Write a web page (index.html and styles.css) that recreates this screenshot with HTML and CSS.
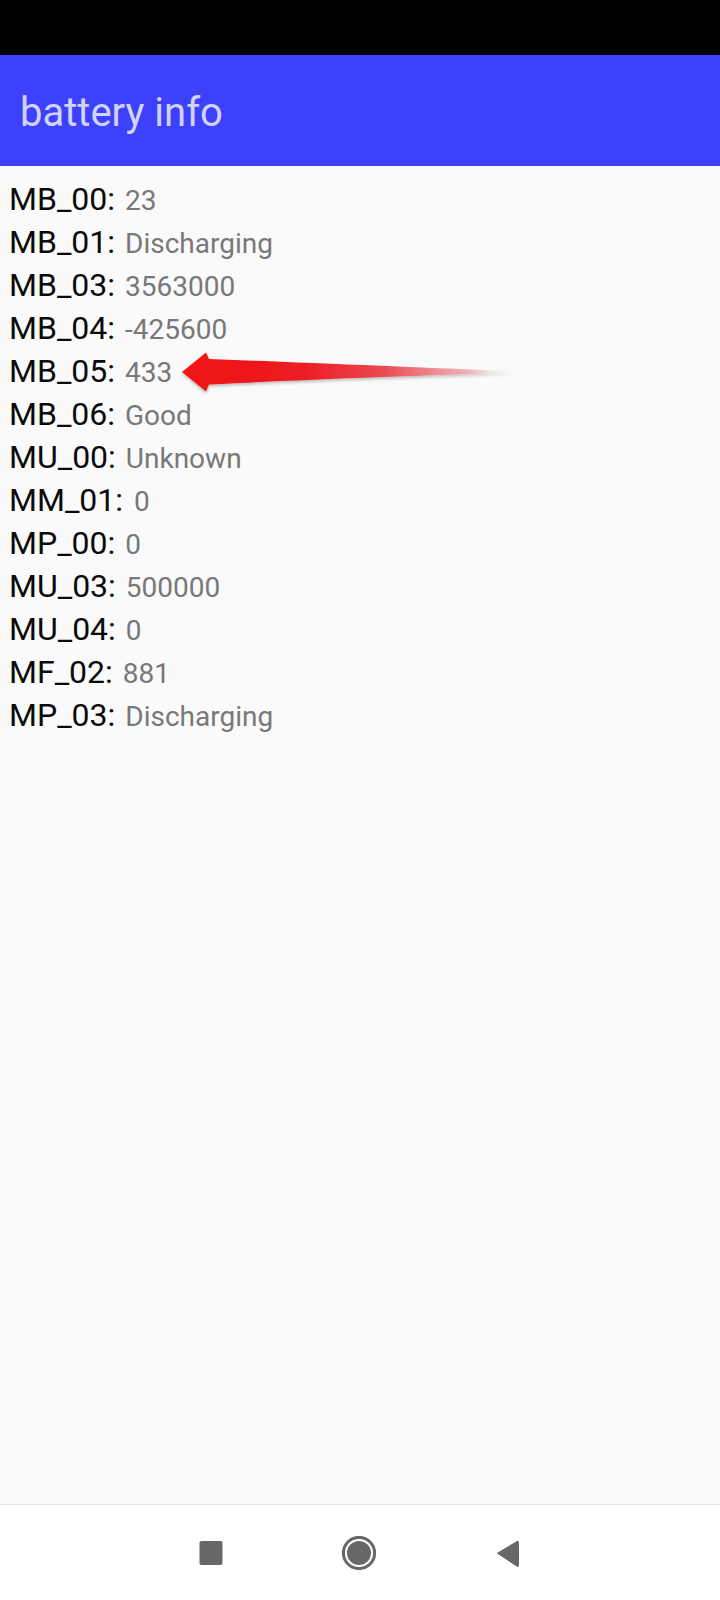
FILE: index.html
```html
<!DOCTYPE html>
<html>
<head>
<meta charset="utf-8">
<link rel="stylesheet" href="styles.css">
</head>
<body>
<div class="screen">
  <div class="status"></div>
  <div class="appbar"><span class="title">battery info</span></div>
  <div class="content">
    <div class="row"><span class="key">MB_00:</span><span class="val">23</span></div>
    <div class="row"><span class="key">MB_01:</span><span class="val">Discharging</span></div>
    <div class="row"><span class="key">MB_03:</span><span class="val">3563000</span></div>
    <div class="row"><span class="key">MB_04:</span><span class="val">-425600</span></div>
    <div class="row"><span class="key">MB_05:</span><span class="val">433</span></div>
    <div class="row"><span class="key">MB_06:</span><span class="val">Good</span></div>
    <div class="row"><span class="key">MU_00:</span><span class="val">Unknown</span></div>
    <div class="row"><span class="key">MM_01:</span><span class="val wide">0</span></div>
    <div class="row"><span class="key">MP_00:</span><span class="val">0</span></div>
    <div class="row"><span class="key">MU_03:</span><span class="val">500000</span></div>
    <div class="row"><span class="key">MU_04:</span><span class="val">0</span></div>
    <div class="row"><span class="key">MF_02:</span><span class="val">881</span></div>
    <div class="row"><span class="key">MP_03:</span><span class="val">Discharging</span></div>
    <svg class="arrow" width="360" height="60" viewBox="170 345 360 60">
      <defs>
        <linearGradient id="ag" x1="183" y1="0" x2="520" y2="0" gradientUnits="userSpaceOnUse">
          <stop offset="0" stop-color="#f01313"/>
          <stop offset="0.35" stop-color="#ec1c22"/>
          <stop offset="0.6" stop-color="#ea4a52"/>
          <stop offset="0.85" stop-color="#f0a8ac" stop-opacity="0.8"/>
          <stop offset="1" stop-color="#fafafa" stop-opacity="0"/>
        </linearGradient>
        <filter id="sh" x="-10%" y="-50%" width="120%" height="200%">
          <feGaussianBlur in="SourceAlpha" stdDeviation="1.5"/>
          <feOffset dx="0" dy="1.5" result="b"/>
          <feComponentTransfer><feFuncA type="linear" slope="0.25"/></feComponentTransfer>
          <feMerge><feMergeNode/><feMergeNode in="SourceGraphic"/></feMerge>
        </filter>
      </defs>
      <path filter="url(#sh)" fill="url(#ag)" d="M182,372 L206,352.5 L209,359 C300,362.5 420,367.5 520,371.5 L520,372.5 C420,375.5 300,379.5 209,384.5 L206,391.5 Z"/>
    </svg>
  </div>
  <div class="navbar">
    <span class="nav-ico">
      <svg width="34" height="34" viewBox="0 0 34 34"><rect x="5.5" y="5" width="23" height="24" rx="2" fill="#676767"/></svg>
    </span>
    <span class="nav-ico">
      <svg width="34" height="34" viewBox="0 0 34 34"><circle cx="17" cy="17" r="15.6" fill="none" stroke="#676767" stroke-width="3"/><circle cx="17" cy="17" r="12" fill="#676767"/></svg>
    </span>
    <span class="nav-ico">
      <svg width="34" height="34" viewBox="0 0 34 34"><path d="M7.5 17.2 L27 5.5 Q28.5 4.8 28.5 6.5 L28.5 29.5 Q28.5 31 27 30.2 Z" fill="#676767" stroke="#676767" stroke-width="1" stroke-linejoin="round"/></svg>
    </span>
  </div>
</div>
</body>
</html>
```

FILE: styles.css
```css
html, body {
  margin: 0;
  padding: 0;
  background: #fafafa;
}
.screen {
  width: 720px;
  height: 1600px;
  display: flex;
  flex-direction: column;
  font-family: Roboto, "Noto Sans", sans-serif;
  overflow: hidden;
}
.status {
  height: 55px;
  background: #000;
  flex: none;
}
.appbar {
  height: 111px;
  background: #3d41fb;
  flex: none;
  box-sizing: border-box;
  padding: 34px 0 0 20px;
}
.title {
  font-size: 40px;
  line-height: 47px;
  color: #d2d3f8;
  display: block;
}
.content {
  flex: 1;
  position: relative;
  padding: 12px 0 0 9px;
  background: #fafafa;
}
.row {
  height: 43px;
  line-height: 43px;
  white-space: nowrap;
}
.key {
  font-size: 32px;
  color: #0a0a0a;
}
.val {
  font-size: 28px;
  color: #787878;
  margin-left: 10px;
}
.val.wide {
  margin-left: 11px;
}
.arrow {
  position: absolute;
  left: 170px;
  top: 179px;
  overflow: visible;
}
.navbar {
  height: 96px;
  flex: none;
  background: #fff;
  border-top: 1px solid #e4e4e4;
  box-sizing: border-box;
  display: flex;
  justify-content: center;
  align-items: center;
  gap: 114px;
  padding-right: 3px;
}
.nav-ico {
  width: 34px;
  height: 34px;
  display: block;
}
.nav-ico svg {
  display: block;
}
```
